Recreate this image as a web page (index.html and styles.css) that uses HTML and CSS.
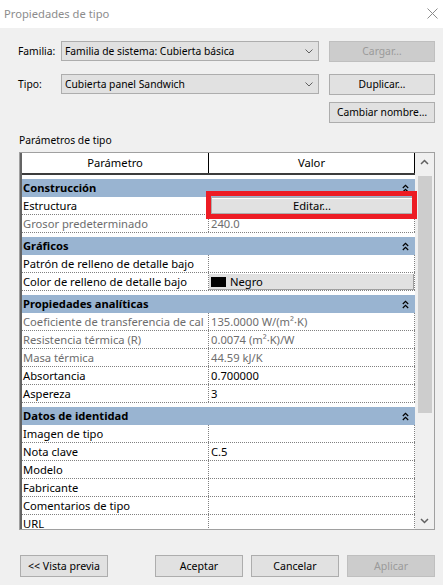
FILE: index.html
```html
<!DOCTYPE html>
<html lang="es">
<head>
<meta charset="utf-8">
<title>Propiedades de tipo</title>
<link rel="stylesheet" href="styles.css">
</head>
<body>
<div class="titlebar">
  <span class="title">Propiedades de tipo</span>
  <svg class="close" width="11" height="11" viewBox="0 0 11 11"><path d="M0.5 0.5 L10.5 10.5 M10.5 0.5 L0.5 10.5" stroke="#8c8c8c" stroke-width="1" fill="none"/></svg>
</div>
<div class="content">
  <div class="form-row">
    <label>Familia:</label>
    <div class="combo"><span>Familia de sistema: Cubierta básica</span><svg width="8" height="5" viewBox="0 0 8 5"><path d="M0.5 0.5 L4 4 L7.5 0.5" stroke="#606060" fill="none"/></svg></div>
    <button class="btn disabled">Cargar…</button>
  </div>
  <div class="form-row r2">
    <label>Tipo:</label>
    <div class="combo"><span>Cubierta panel Sandwich</span><svg width="8" height="5" viewBox="0 0 8 5"><path d="M0.5 0.5 L4 4 L7.5 0.5" stroke="#606060" fill="none"/></svg></div>
    <button class="btn">Duplicar…</button>
  </div>
  <div class="form-row r3">
    <button class="btn">Cambiar nombre…</button>
  </div>
  <div class="section-label">Parámetros de tipo</div>
  <div class="frame">
    <div class="grid">
      <div class="grid-head"><div class="hc c1">Parámetro</div><div class="hc c2">Valor</div></div>

      <div class="group"><span>Construcción</span><svg class="gicon" width="7" height="9" viewBox="0 0 7 9"><path d="M0.8 4 L3.5 1.3 L6.2 4 M0.8 8 L3.5 5.3 L6.2 8" stroke="#000" stroke-width="1.2" fill="none"/></svg></div>
      <div class="prow"><div class="pc c1">Estructura</div><div class="pc c2 edit"><div class="editbtn">Editar...</div><div class="mark"></div></div></div>
      <div class="prow gray"><div class="pc c1">Grosor predeterminado</div><div class="pc c2">240.0</div></div>

      <div class="group"><span>Gráficos</span><svg class="gicon" width="7" height="9" viewBox="0 0 7 9"><path d="M0.8 4 L3.5 1.3 L6.2 4 M0.8 8 L3.5 5.3 L6.2 8" stroke="#000" stroke-width="1.2" fill="none"/></svg></div>
      <div class="prow"><div class="pc c1">Patrón de relleno de detalle bajo</div><div class="pc c2"></div></div>
      <div class="prow"><div class="pc c1">Color de relleno de detalle bajo</div><div class="pc c2 colorcell"><div class="colorbox"><span class="swatch"></span>Negro</div></div></div>

      <div class="group"><span>Propiedades analíticas</span><svg class="gicon" width="7" height="9" viewBox="0 0 7 9"><path d="M0.8 4 L3.5 1.3 L6.2 4 M0.8 8 L3.5 5.3 L6.2 8" stroke="#000" stroke-width="1.2" fill="none"/></svg></div>
      <div class="prow gray"><div class="pc c1">Coeficiente de transferencia de cal</div><div class="pc c2">135.0000 W/(m²·K)</div></div>
      <div class="prow gray"><div class="pc c1">Resistencia térmica (R)</div><div class="pc c2">0.0074 (m²·K)/W</div></div>
      <div class="prow gray"><div class="pc c1">Masa térmica</div><div class="pc c2">44.59 kJ/K</div></div>
      <div class="prow"><div class="pc c1">Absortancia</div><div class="pc c2">0.700000</div></div>
      <div class="prow"><div class="pc c1">Aspereza</div><div class="pc c2">3</div></div>

      <div class="group"><span>Datos de identidad</span><svg class="gicon" width="7" height="9" viewBox="0 0 7 9"><path d="M0.8 4 L3.5 1.3 L6.2 4 M0.8 8 L3.5 5.3 L6.2 8" stroke="#000" stroke-width="1.2" fill="none"/></svg></div>
      <div class="prow"><div class="pc c1">Imagen de tipo</div><div class="pc c2"></div></div>
      <div class="prow"><div class="pc c1">Nota clave</div><div class="pc c2">C.5</div></div>
      <div class="prow"><div class="pc c1">Modelo</div><div class="pc c2"></div></div>
      <div class="prow"><div class="pc c1">Fabricante</div><div class="pc c2"></div></div>
      <div class="prow"><div class="pc c1">Comentarios de tipo</div><div class="pc c2"></div></div>
      <div class="prow"><div class="pc c1">URL</div><div class="pc c2"></div></div>
    </div>
    <div class="scrollbar">
      <div class="sb-arrow"><svg width="9" height="6" viewBox="0 0 9 6"><path d="M1 5 L4.5 1.5 L8 5" stroke="#606060" stroke-width="1.5" fill="none"/></svg></div>
      <div class="sb-thumb"></div>
      <div class="sb-space"></div>
      <div class="sb-arrow"><svg width="9" height="6" viewBox="0 0 9 6"><path d="M1 1 L4.5 4.5 L8 1" stroke="#606060" stroke-width="1.5" fill="none"/></svg></div>
    </div>
  </div>
  <div class="footer">
    <button class="btn fbtn">&lt;&lt; Vista previa</button>
    <button class="btn fbtn accept">Aceptar</button>
    <button class="btn fbtn">Cancelar</button>
    <button class="btn fbtn disabled">Aplicar</button>
  </div>
</div>
</body>
</html>
```

FILE: styles.css
```css
* { box-sizing: border-box; }
html, body { margin: 0; padding: 0; }
body {
  width: 443px;
  height: 585px;
  overflow: hidden;
  background: #f0f0f0;
  font-family: "Noto Sans", "Open Sans", sans-serif;
  font-size: 10.3px;
  color: #000;
}
.titlebar {
  height: 28px;
  background: #fff;
  display: flex;
  justify-content: space-between;
  align-items: flex-start;
  padding-left: 4px;
}
.title {
  font-size: 11.2px;
  color: #8c8c8c;
  line-height: 28px;
}
.close { margin: 8px 5px 0 0; }
.content { padding: 13px 0 0 18px; }
.form-row {
  display: flex;
  align-items: flex-start;
  height: 21px;
}
.form-row label {
  width: 43px;
  line-height: 20px;
}
.combo {
  width: 258px;
  height: 20px;
  background: #e1e1e1;
  border: 1px solid #adadad;
  display: flex;
  align-items: center;
  justify-content: space-between;
  padding: 0 5px 0 3px;
  line-height: 18px;
}
.btn {
  width: 106px;
  height: 21px;
  margin: 0 0 0 10px;
  padding: 0;
  background: #e1e1e1;
  border: 1px solid #adadad;
  font: inherit;
  color: #000;
  line-height: 19px;
  text-align: center;
}
.btn.disabled {
  background: #cccccc;
  border-color: #bfbfbf;
  color: #9a9a9a;
}
.r2 { margin-top: 12px; }
.r3 { margin-top: 7px; }
.r3 .btn { margin-left: 311px; }
.section-label {
  margin-top: 9px;
  padding-left: 1px;
  line-height: 17px;
}
.frame {
  width: 416px;
  height: 378px;
  margin: 3px 0 0 1px;
  border: 1px solid #a0a0a0;
  background: #fff;
  display: flex;
  overflow: hidden;
  font-size: 11.2px;
}
.grid {
  width: 395px;
  flex: none;
  border-left: 2px solid #646464;
}
.grid-head {
  display: flex;
  height: 22px;
  border-bottom: 2px solid #3c3c3c;
}
.hc {
  text-align: center;
  line-height: 20px;
}
.hc.c1 { width: 187px; border-right: 1px solid #000; }
.hc.c2 { flex: 1; border-right: 1px solid #000; }
.group {
  height: 22px;
  border-top: 4px solid #fff;
  background: #99b4d1;
  display: flex;
  align-items: center;
  justify-content: space-between;
  padding: 0 6px 0 1px;
  font-weight: bold;
  line-height: 18px;
}
.prow {
  display: flex;
  height: 18px;
  border-bottom: 1px dotted #808080;
  line-height: 17px;
}
.pc {
  white-space: nowrap;
  overflow: hidden;
}
.pc.c1 {
  width: 187px;
  border-right: 1px dotted #808080;
  padding-left: 1px;
}
.pc.c2 {
  flex: 1;
  border-right: 1px dotted #808080;
  padding-left: 2px;
}
.prow.gray { color: #6d6d6d; }
.pc.c2.edit {
  position: relative;
  overflow: visible;
  padding: 0 1px 0 2px;
}
.editbtn {
  height: 17px;
  background: #e1e1e1;
  border: 1px solid #adadad;
  box-shadow: inset 0 1px #fff;
  text-align: center;
  line-height: 15px;
}
.mark {
  position: absolute;
  left: -3px;
  right: -3px;
  top: -6px;
  bottom: -5px;
  border: 5px solid #ed1c24;
  z-index: 2;
}
.pc.c2.colorcell { padding: 1px 0 0 0; }
.colorbox {
  height: 16px;
  display: flex;
  align-items: center;
  background: #e1e1e1;
  border-right: 1px solid #a0a0a0;
  border-bottom: 1px solid #a0a0a0;
  padding-left: 2px;
}
.swatch {
  width: 15px;
  height: 10px;
  background: #000;
  margin-right: 4px;
}
.scrollbar {
  width: 19px;
  flex: none;
  background: #f0f0f0;
  display: flex;
  flex-direction: column;
}
.sb-arrow {
  height: 17px;
  flex: none;
  display: flex;
  align-items: center;
  justify-content: center;
}
.sb-thumb {
  height: 237px;
  margin: 6px 2px 0 3px;
  background: #cdcdcd;
  flex: none;
}
.sb-space { flex: 1; }
.footer {
  display: flex;
  margin-top: 25px;
  padding-left: 2px;
}
.fbtn {
  width: 88px;
  height: 22px;
  margin-left: 8px;
  line-height: 20px;
  font-size: 10.6px;
}
.fbtn:first-child { margin-left: 0; }
.fbtn.accept { margin-left: 47px; }
```
